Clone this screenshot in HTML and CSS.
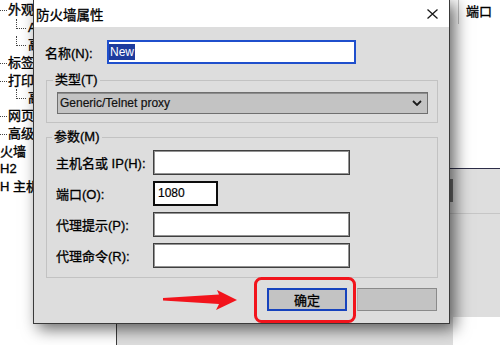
FILE: index.html
```html
<!DOCTYPE html>
<html lang="zh-CN">
<head>
<meta charset="utf-8">
<title>防火墙属性</title>
<link rel="stylesheet" href="styles.css">
</head>
<body>
<div class="app">
  <aside class="tree">
    <div class="node l0"><span class="dots"></span>外观</div>
    <div class="node l1"><span class="elbow"></span>A</div>
    <div class="node l1"><span class="elbow"></span>高</div>
    <div class="node l0"><span class="dots"></span>标签</div>
    <div class="node l0"><span class="dots"></span>打印</div>
    <div class="node l1"><span class="elbow"></span>高</div>
    <div class="node l0"><span class="dots"></span>网页</div>
    <div class="node l0"><span class="dots"></span>高级</div>
    <div class="node root">火墙</div>
    <div class="node root">H2</div>
    <div class="node root">H 主机</div>
  </aside>
  <main class="list">
    <div class="list-top">
      <div class="list-head">
        <div class="col col-a"></div>
        <div class="col col-port">端口</div>
      </div>
    </div>
    <div class="list-bottom">
      <div class="strip"><div class="thumb"></div></div>
      <div class="fill"></div>
      <div class="foot"><div class="foot-gap"></div><div class="foot-white"></div></div>
    </div>
  </main>
</div>

<section class="dialog">
  <header class="titlebar">
    <span class="title">防火墙属性</span>
    <svg class="close" width="11" height="10" viewBox="0 0 11 10"><path d="M0.5 0.5 L10.5 9.5 M10.5 0.5 L0.5 9.5" stroke="#1a1a1a" stroke-width="1.3" fill="none"/></svg>
  </header>
  <div class="dlg-body">
    <div class="name-row">
      <span class="lbl name-lbl">名称(N):</span>
      <div class="field name-field"><span class="sel">New</span></div>
    </div>
    <fieldset class="group g-type">
      <legend>类型(T)</legend>
      <div class="combo">
        <span class="combo-text">Generic/Telnet proxy</span>
        <svg class="chev" width="10" height="6" viewBox="0 0 10 6"><path d="M1 1 L5 5 L9 1" stroke="#1a1a1a" stroke-width="1.8" fill="none"/></svg>
      </div>
    </fieldset>
    <fieldset class="group g-params">
      <legend>参数(M)</legend>
      <div class="param"><span class="lbl">主机名或 IP(H):</span><div class="field wide"></div></div>
      <div class="param"><span class="lbl">端口(O):</span><div class="field port">1080</div></div>
      <div class="param"><span class="lbl">代理提示(P):</span><div class="field wide"></div></div>
      <div class="param"><span class="lbl">代理命令(R):</span><div class="field wide"></div></div>
    </fieldset>
    <div class="buttons">
      <button class="btn btn-ok">确定</button>
      <button class="btn btn-cancel"></button>
    </div>
  </div>
</section>

<svg class="annot" width="500" height="345" viewBox="0 0 500 345">
  <rect x="255.5" y="278.5" width="99" height="43" rx="6" ry="6" fill="none" stroke="#f2141c" stroke-width="3"/>
  <polygon points="163,298 219,294.5 217,290 237,300 216,310 219,304 163,300.5" fill="#f2141c"/>
</svg>
</body>
</html>
```

FILE: styles.css
```css
html, body {
  margin: 0;
  padding: 0;
}
body {
  width: 500px;
  height: 345px;
  overflow: hidden;
  position: relative;
  background: #ffffff;
  font-family: "Liberation Sans", "Noto Sans CJK SC", sans-serif;
  font-size: 13px;
  color: #000;
}

/* background application */
.app {
  display: flex;
  width: 500px;
  height: 345px;
}
.tree {
  width: 116px;
  flex: none;
  background: #fff;
  border-right: 1px solid #3c3c3c;
  padding-top: 1px;
  box-sizing: content-box;
  overflow: hidden;
}
.node {
  height: 17.7px;
  line-height: 17.7px;
  white-space: nowrap;
  font-size: 13px;
  -webkit-text-stroke: 0.35px #000;
}
.dots {
  display: inline-block;
  width: 7px;
  height: 0;
  border-top: 1px dotted #444;
  vertical-align: middle;
  margin-right: 1px;
}
.elbow {
  display: inline-block;
  vertical-align: top;
  width: 9px;
  height: 9px;
  margin-left: 16px;
  margin-right: 2px;
  border-left: 1px dotted #444;
  border-bottom: 1px dotted #444;
}
.list {
  flex: 1;
  display: flex;
  flex-direction: column;
}
.list-top {
  height: 168px;
  background: #fff;
  border-bottom: 1px solid #2d2d48;
}
.list-head {
  display: flex;
  height: 24px;
}
.col-a {
  width: 341px;
  border-right: 1px solid #c4c4c4;
}
.col-port {
  padding-left: 7px;
  line-height: 24px;
  font-size: 13px;
  -webkit-text-stroke: 0.35px #000;
}
.list-bottom {
  flex: 1;
  display: flex;
  flex-direction: column;
  background: #dedede;
}
.strip {
  height: 44px;
  border-bottom: 1px solid #c6c6c6;
}
.thumb {
  margin-top: 10px;
  margin-left: 332px;
  width: 4px;
  height: 23px;
  background: #707070;
}
.fill {
  flex: 1;
}
.foot {
  display: flex;
  height: 28px;
}
.foot-gap {
  flex: 1;
}
.foot-white {
  width: 47px;
  background: #fff;
}

/* dialog window */
.dialog {
  position: absolute;
  left: 33px;
  top: -1px;
  width: 417px;
  height: 325px;
  box-sizing: border-box;
  border: 1px solid #3a3a3a;
  background: #dddddd;
  box-shadow: 5px 5px 15px rgba(0, 0, 0, 0.6);
  display: flex;
  flex-direction: column;
}
.titlebar {
  height: 27px;
  flex: none;
  background: #fff;
  display: flex;
  align-items: center;
  padding-left: 2px;
}
.title {
  font-family: "Noto Sans CJK SC", sans-serif;
  font-size: 13.5px;
  -webkit-text-stroke: 0.3px #000;
}
.close {
  margin-left: auto;
  margin-right: 11px;
}
.dlg-body {
  flex: 1;
  padding: 13px 11px 0 11px;
}
.lbl {
  white-space: nowrap;
  font-size: 13px;
  -webkit-text-stroke: 0.3px #000;
}
.name-row {
  display: flex;
  align-items: center;
  height: 24px;
}
.name-lbl {
  width: 62px;
}
.field {
  box-sizing: border-box;
  height: 25px;
  background: #fff;
  border: 1px solid #3f3f3f;
  box-shadow: inset 0 0 0 1px #939393;
}
.name-field {
  width: 249px;
  height: 24px;
  border: 2px solid #1f4fcc;
  box-shadow: none;
  display: flex;
  align-items: center;
}
.sel {
  background: #1e3c9e;
  color: #fff;
  font-size: 12px;
  line-height: 16px;
  padding: 0 1px 0 1px;
}
.group {
  margin: 0 0 0 1px;
  width: 392px;
  box-sizing: border-box;
  border: 1px solid #c2c2c2;
  min-width: 0;
}
.group legend {
  padding: 0 2px;
  margin-left: -4px;
  line-height: 16px;
  font-size: 13px;
  -webkit-text-stroke: 0.3px #000;
}
.g-type {
  margin-top: 8px;
  padding: 4px 8px 8px 10px;
}
.combo {
  box-sizing: border-box;
  width: 371px;
  height: 22px;
  background: #c3c3c3;
  border: 1px solid #6f6f6f;
  box-shadow: inset 0 1px 0 #8c8c8c;
  display: flex;
  align-items: center;
  padding-left: 2px;
}
.combo-text {
  font-size: 12px;
  color: #111;
  -webkit-text-stroke: 0.2px #111;
}
.chev {
  margin-left: auto;
  margin-right: 5px;
}
.g-params {
  margin-top: 6px;
  padding: 5px 8px 9px 9px;
  display: flex;
  flex-direction: column;
  gap: 6px;
}
.param {
  display: flex;
  align-items: center;
  height: 25px;
}
.param .lbl {
  width: 97px;
}
.wide {
  width: 197px;
}
.port {
  width: 65px;
  border: 2px solid #0c0c0c;
  box-shadow: none;
  font-size: 12px;
  line-height: 21px;
  padding-left: 3px;
  -webkit-text-stroke: 0.2px #000;
}
.buttons {
  display: flex;
  justify-content: flex-end;
  gap: 10px;
  margin-top: 10px;
  margin-right: 1px;
}
.btn {
  box-sizing: border-box;
  width: 80px;
  height: 23px;
  margin: 0;
  padding: 0;
  background: #c3c3c3;
  border: 1px solid #8a8a8a;
  border-left-color: #b0b0b0;
  font-family: "Noto Sans CJK SC", sans-serif;
  font-size: 13px;
  color: #000;
  -webkit-text-stroke: 0.3px #000;
}
.btn-ok {
  border: 2px solid #1743bd;
}

/* annotation overlay */
.annot {
  position: absolute;
  left: 0;
  top: 0;
  pointer-events: none;
}
```
